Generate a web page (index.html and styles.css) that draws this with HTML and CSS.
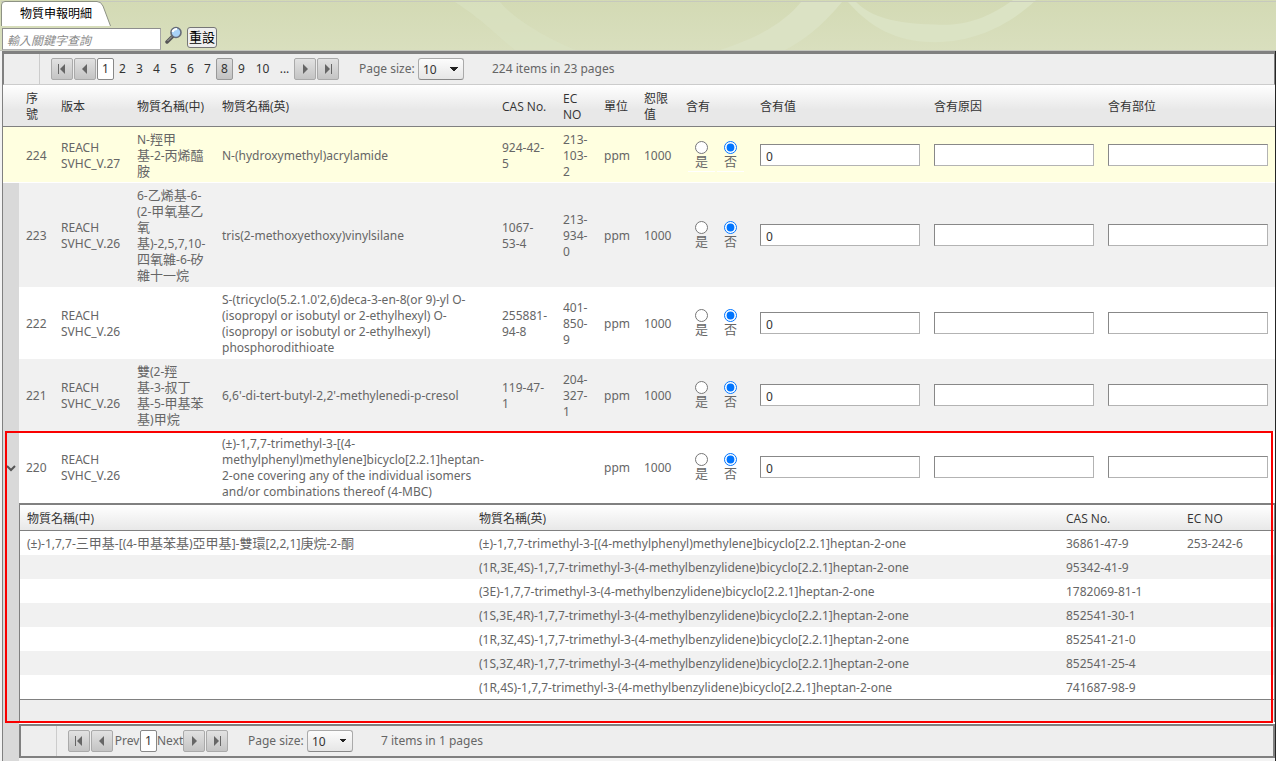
FILE: index.html
```html
<!DOCTYPE html>
<html lang="zh-Hant">
<head>
<meta charset="utf-8">
<title>物質申報明細</title>
<link rel="stylesheet" href="styles.css">
</head>
<body>
<header class="banner">
  <svg class="swirl" viewBox="0 0 1276 51" preserveAspectRatio="none" aria-hidden="true">
    <path d="M455 2C485 22 500 39 515 51H576C545 38 515 20 500 2Z" fill="#dbe2c3" opacity=".6"/>
    <path d="M720 51C760 38 785 22 801 2H842C822 27 802 42 785 51Z" fill="#dbe2c4"/>
    <path d="M848 2C875 34 905 43 935 43C978 43 1012 23 1036 0H1013C985 21 960 27 935 25C895 24 872 18 856 2Z" fill="#dbe3c4"/>
  </svg>
  <div class="tabs">
    <a class="tab" href="#">
      <svg class="tab-shape" viewBox="0 0 110 26" aria-hidden="true"><path d="M0.500 26V5Q0.500 1.500 4 1.500H96Q100 1.500 102 6L109.500 26" fill="#fff" stroke="#8d9284"/></svg>
      <span class="tab-text">物質申報明細</span>
    </a>
  </div>
  <form class="search">
    <input class="keyword" type="text" placeholder="輸入關鍵字查詢" aria-label="輸入關鍵字查詢">
    <svg class="lens" viewBox="0 0 18 18" aria-hidden="true"><path d="M2 16L8 10" stroke="#555" stroke-width="3.500" stroke-linecap="round"/><path d="M2.500 15L7 10.500" stroke="#aaa" stroke-width="1"/><circle cx="11" cy="6.500" r="5" fill="#a9d2f7" stroke="#666b78" stroke-width="1.600"/><path d="M7.500 6Q8.500 3 12 3" stroke="#fff" stroke-width="2" fill="none"/></svg>
    <button class="reset" type="button">重設</button>
  </form>
</header>

<main class="grid">
  <nav class="pager">
    <div class="pager-gutter"></div>
    <div class="pager-body">
      <div class="pager-buttons">
        <button class="pg" aria-label="First"><svg viewBox="0 0 10 10"><path d="M1.500 0V10" stroke="#666" fill="none"/><path d="M8 0V10L3 5Z" fill="#666"/></svg></button>
        <button class="pg" aria-label="Previous"><svg viewBox="0 0 10 10"><path d="M7 0V10L2 5Z" fill="#666"/></svg></button>
        <a class="num current" href="#">1</a><a class="num" href="#">2</a><a class="num" href="#">3</a><a class="num" href="#">4</a><a class="num" href="#">5</a><a class="num" href="#">6</a><a class="num" href="#">7</a><a class="num hover" href="#">8</a><a class="num" href="#">9</a><a class="num wide" href="#">10</a><a class="num more" href="#">...</a>
        <button class="pg" aria-label="Next"><svg viewBox="0 0 10 10"><path d="M3 0V10L8 5Z" fill="#666"/></svg></button>
        <button class="pg" aria-label="Last"><svg viewBox="0 0 10 10"><path d="M2 0V10L7 5Z" fill="#666"/><path d="M8.500 0V10" stroke="#666" fill="none"/></svg></button>
      </div>
      <label class="size" for="size-main">Page size:</label>
      <select class="size-box" id="size-main"><option>10</option><option>20</option></select>
      <span class="info">224 items in 23 pages</span>
    </div>
  </nav>

  <table class="items">
    <colgroup><col class="c-exp"><col class="c-no"><col class="c-ver"><col class="c-zh"><col><col class="c-cas"><col class="c-ec"><col class="c-unit"><col class="c-lim"><col class="c-has"><col class="c-in"><col class="c-in"><col class="c-in"></colgroup>
    <thead>
      <tr><th></th><th>序<br>號</th><th>版本</th><th>物質名稱(中)</th><th>物質名稱(英)</th><th>CAS No.</th><th>EC<br>NO</th><th>單位</th><th>恕限<br>值</th><th>含有</th><th>含有值</th><th>含有原因</th><th>含有部位</th></tr>
    </thead>
    <tbody>
      <tr class="active">
        <td class="exp"></td><td>224</td><td>REACH<br>SVHC_V.27</td>
        <td>N-<span class="zh">羥甲</span><br><span class="zh">基</span>-2-<span class="zh">丙烯醯</span><br><span class="zh">胺</span></td>
        <td>N-(hydroxymethyl)acrylamide</td><td>924-42-<br>5</td><td>213-<br>103-<br>2</td><td>ppm</td><td>1000</td>
        <td class="has"><div class="choice"><label><input type="radio" name="r224">是</label><label><input type="radio" name="r224" checked>否</label></div></td>
        <td><input class="field" value="0" aria-label="含有值"></td><td><input class="field" aria-label="含有原因"></td><td><input class="field" aria-label="含有部位"></td>
      </tr>
      <tr class="alt">
        <td class="exp"></td><td>223</td><td>REACH<br>SVHC_V.26</td>
        <td>6-<span class="zh">乙烯基</span>-6-<br>(2-<span class="zh">甲氧基乙</span><br><span class="zh">氧</span><br><span class="zh">基</span>)-2,5,7,10-<br><span class="zh">四氧雜</span>-6-<span class="zh">矽</span><br><span class="zh">雜十一烷</span></td>
        <td>tris(2-methoxyethoxy)vinylsilane</td><td>1067-<br>53-4</td><td>213-<br>934-<br>0</td><td>ppm</td><td>1000</td>
        <td class="has"><div class="choice"><label><input type="radio" name="r223">是</label><label><input type="radio" name="r223" checked>否</label></div></td>
        <td><input class="field" value="0" aria-label="含有值"></td><td><input class="field" aria-label="含有原因"></td><td><input class="field" aria-label="含有部位"></td>
      </tr>
      <tr>
        <td class="exp"></td><td>222</td><td>REACH<br>SVHC_V.26</td><td></td>
        <td>S-(tricyclo(5.2.1.0'2,6)deca-3-en-8(or 9)-yl O-<br>(isopropyl or isobutyl or 2-ethylhexyl) O-<br>(isopropyl or isobutyl or 2-ethylhexyl)<br>phosphorodithioate</td><td>255881-<br>94-8</td><td>401-<br>850-<br>9</td><td>ppm</td><td>1000</td>
        <td class="has"><div class="choice"><label><input type="radio" name="r222">是</label><label><input type="radio" name="r222" checked>否</label></div></td>
        <td><input class="field" value="0" aria-label="含有值"></td><td><input class="field" aria-label="含有原因"></td><td><input class="field" aria-label="含有部位"></td>
      </tr>
      <tr class="alt">
        <td class="exp"></td><td>221</td><td>REACH<br>SVHC_V.26</td>
        <td><span class="zh">雙</span>(2-<span class="zh">羥</span><br><span class="zh">基</span>-3-<span class="zh">叔丁</span><br><span class="zh">基</span>-5-<span class="zh">甲基苯</span><br><span class="zh">基</span>)<span class="zh">甲烷</span></td>
        <td>6,6'-di-tert-butyl-2,2'-methylenedi-p-cresol</td><td>119-47-<br>1</td><td>204-<br>327-<br>1</td><td>ppm</td><td>1000</td>
        <td class="has"><div class="choice"><label><input type="radio" name="r221">是</label><label><input type="radio" name="r221" checked>否</label></div></td>
        <td><input class="field" value="0" aria-label="含有值"></td><td><input class="field" aria-label="含有原因"></td><td><input class="field" aria-label="含有部位"></td>
      </tr>
      <tr>
        <td class="exp"><button class="toggle" aria-label="Collapse"><svg viewBox="0 0 10 7"><path d="M1 1L5 5L9 1" fill="none" stroke="#555" stroke-width="2"/></svg></button></td><td>220</td><td>REACH<br>SVHC_V.26</td><td></td>
        <td>(±)-1,7,7-trimethyl-3-[(4-<br>methylphenyl)methylene]bicyclo[2.2.1]heptan-<br>2-one covering any of the individual isomers<br>and/or combinations thereof (4-MBC)</td><td></td><td></td><td>ppm</td><td>1000</td>
        <td class="has"><div class="choice"><label><input type="radio" name="r220">是</label><label><input type="radio" name="r220" checked>否</label></div></td>
        <td><input class="field" value="0" aria-label="含有值"></td><td><input class="field" aria-label="含有原因"></td><td><input class="field" aria-label="含有部位"></td>
      </tr>
      <tr>
        <td class="exp"></td>
        <td class="detail" colspan="12">
          <div class="marked">
            <div class="red-frame"></div>
            <div class="detail-grid">
              <table class="parts">
                <colgroup><col><col class="p-en"><col class="p-cas"><col class="p-ec"></colgroup>
                <thead><tr><th>物質名稱(中)</th><th>物質名稱(英)</th><th>CAS No.</th><th>EC NO</th></tr></thead>
                <tbody>
                  <tr><td>(±)-1,7,7-<span class="zh">三甲基</span>-[(4-<span class="zh">甲基苯基</span>)<span class="zh">亞甲基</span>]-<span class="zh">雙環</span>[2,2,1]<span class="zh">庚烷</span>-2-<span class="zh">酮</span></td><td>(±)-1,7,7-trimethyl-3-[(4-methylphenyl)methylene]bicyclo[2.2.1]heptan-2-one</td><td>36861-47-9</td><td>253-242-6</td></tr>
                  <tr class="alt"><td></td><td>(1R,3E,4S)-1,7,7-trimethyl-3-(4-methylbenzylidene)bicyclo[2.2.1]heptan-2-one</td><td>95342-41-9</td><td></td></tr>
                  <tr><td></td><td>(3E)-1,7,7-trimethyl-3-(4-methylbenzylidene)bicyclo[2.2.1]heptan-2-one</td><td>1782069-81-1</td><td></td></tr>
                  <tr class="alt"><td></td><td>(1S,3E,4R)-1,7,7-trimethyl-3-(4-methylbenzylidene)bicyclo[2.2.1]heptan-2-one</td><td>852541-30-1</td><td></td></tr>
                  <tr><td></td><td>(1R,3Z,4S)-1,7,7-trimethyl-3-(4-methylbenzylidene)bicyclo[2.2.1]heptan-2-one</td><td>852541-21-0</td><td></td></tr>
                  <tr class="alt"><td></td><td>(1S,3Z,4R)-1,7,7-trimethyl-3-(4-methylbenzylidene)bicyclo[2.2.1]heptan-2-one</td><td>852541-25-4</td><td></td></tr>
                  <tr><td></td><td>(1R,4S)-1,7,7-trimethyl-3-(4-methylbenzylidene)bicyclo[2.2.1]heptan-2-one</td><td>741687-98-9</td><td></td></tr>
                </tbody>
              </table>
              <div class="parts-foot"></div>
            </div>
          </div>
          <nav class="pager sub">
            <div class="pager-gutter"></div>
            <div class="pager-body">
              <div class="pager-buttons">
                <button class="pg" aria-label="First"><svg viewBox="0 0 10 10"><path d="M1.500 0V10" stroke="#666" fill="none"/><path d="M8 0V10L3 5Z" fill="#666"/></svg></button>
                <button class="pg" aria-label="Previous"><svg viewBox="0 0 10 10"><path d="M7 0V10L2 5Z" fill="#666"/></svg></button>
                <a class="word" href="#">Prev</a><a class="num current" href="#">1</a><a class="word" href="#">Next</a>
                <button class="pg" aria-label="Next page"><svg viewBox="0 0 10 10"><path d="M3 0V10L8 5Z" fill="#666"/></svg></button>
                <button class="pg" aria-label="Last"><svg viewBox="0 0 10 10"><path d="M2 0V10L7 5Z" fill="#666"/><path d="M8.500 0V10" stroke="#666" fill="none"/></svg></button>
              </div>
              <label class="size" for="size-sub">Page size:</label>
              <select class="size-box" id="size-sub"><option>10</option><option>20</option></select>
              <span class="info">7 items in 1 pages</span>
            </div>
          </nav>
        </td>
      </tr>
    </tbody>
  </table>
</main>
</body>
</html>
```

FILE: styles.css
```css
* { box-sizing: border-box; }
html { overflow: hidden; background: #f3f3f3; }
body {
  margin: 0;
  font: 12px/16px "Noto Sans", "Noto Sans CJK TC", sans-serif;
  color: #666;
}
a { color: inherit; text-decoration: none; }
button, input, select { font: inherit; color: inherit; margin: 0; }
.zh { font-size: 13px; line-height: 1; }

/* Banner */
.banner {
  position: relative;
  border-bottom: 1px solid #c4c6be;
  background: linear-gradient(#d3dab4, #d9dfbe);
}
.swirl { position: absolute; inset: 0; width: 100%; height: 100%; }
.tabs { position: relative; height: 26px; margin-left: 1px; }
.tabs::before { content: ""; position: absolute; top: 1px; left: 0; right: 0; border-top: 1px solid #c6c9bd; }
.tab { position: relative; display: block; width: 110px; height: 26px; color: #000; }
.tab-shape { display: block; width: 110px; height: 26px; }
.tab-text { position: absolute; inset: 6px 0 0 19px; }
.search { position: relative; display: flex; align-items: flex-start; height: 24px; padding-left: 2px; }
.keyword {
  width: 159px; height: 22px; margin-top: 2px; padding: 2px 4px 0;
  border: 1px solid #b3b3b3; border-color: #8e8e8e #a5a5a5 #b3b3b3 #8e8e8e;
  background: #fff; font-style: italic;
}
.keyword::placeholder { color: #8a8a8a; opacity: 1; }
.lens { width: 18px; height: 18px; margin: 0 4px; }
.reset {
  width: 30px; height: 21px; margin-top: 1px; padding: 0;
  border: 1px solid #767676; border-radius: 3px; background: #efefef;
  color: #000; font-size: 13px; line-height: 19px;
}

/* Pager */
.grid { margin-left: 2px; border-left: 1px solid #808080; border-right: 1px solid #252525; background: #fff; }
.pager {
  display: flex; height: 34px;
  border: 1px solid #808080; border-width: 3px 1px 1px; border-bottom-color: #ccc;
  background: #eee;
}
.pager-gutter { width: 36px; border-right: 1px solid #ccc; }
.pager-body { display: flex; align-items: center; padding-left: 11px; }
.pager-buttons { display: flex; align-items: center; }
.pg {
  display: flex; align-items: center; justify-content: center;
  width: 22px; height: 22px; margin-right: 1px; padding: 0;
  border: 1px solid #aaa; border-radius: 2px;
  background: linear-gradient(#e2e2e2, #c4c4c4);
}
.pg svg { width: 10px; height: 10px; }
.num {
  width: 17px; height: 22px; border: 1px solid transparent; border-radius: 2px;
  color: #333; line-height: 20px; text-align: center;
}
.current { border-color: #888; background: #fff; }
.hover { border-color: #999; background: linear-gradient(#dedede, #c2c2c2); }
.wide { width: 25px; }
.more { width: 19px; }
.size { width: 56px; margin: 0 3px 0 19px; white-space: nowrap; }
.size-box {
  width: 46px; height: 22px; padding: 1px 4px 0;
  appearance: none; border: 1px solid #aaa; border-bottom-color: #888; border-radius: 3px; color: #333;
  background: linear-gradient(45deg, transparent 50%, #222 50%) 31px 8px / 4px 4px no-repeat, linear-gradient(-45deg, transparent 50%, #222 50%) 35px 8px / 4px 4px no-repeat, linear-gradient(#fcfcfc, #e6e6e6);
}
.info { margin-left: 28px; }

/* Item table */
table { width: 100%; border-collapse: separate; border-spacing: 0; table-layout: fixed; }
th, td { text-align: left; }
th { color: #333; font-family: "Open Sans", "Noto Sans CJK TC", sans-serif; font-weight: 400; border-bottom: 1px solid #808080; }
.items > thead > tr > th { height: 42px; padding: 3px 0 0 7px; background: linear-gradient(#fff, #e8e8e8 60%); }
.items > tbody > tr > td { padding: 5px 0 3px 7px; white-space: nowrap; vertical-align: middle; }
.c-exp { width: 16px; }
.c-no { width: 35px; }
.c-ver { width: 76px; }
.c-zh { width: 85px; }
.c-cas { width: 61px; }
.c-ec { width: 41px; }
.c-unit { width: 40px; }
.c-lim { width: 42px; }
.c-has { width: 74px; }
.c-in { width: 174px; }
.alt > td { background: #f1f1f1; }
.items > tbody > .active > td { background: #ffffe0; border-bottom: 1px solid #fff; padding-bottom: 2px; }
.items > tbody > tr > .exp { padding: 0; background: #d9d9d9; }
.items > tbody > .active > .exp { background: #ffffe0; }
.toggle { display: block; width: 16px; padding: 2px 0 0 3px; border: 0; background: none; }
.toggle svg { display: block; width: 10px; height: 7px; }
.items > tbody > tr > .has { padding-top: 0; padding-bottom: 0; }
.choice { display: flex; gap: 2px; padding-left: 2px; }
.choice label { display: flex; flex-direction: column; align-items: center; width: 27px; padding: 3px 0 2px; border-bottom: 1px solid transparent; font-size: 13px; line-height: 15px; }
.items > tbody > .active .choice label { border-color: #fff; padding-top: 4px; }
.choice input { width: 13px; height: 13px; }
.field {
  display: block; width: 160px; height: 22px; margin-top: -2px; padding: 3px 5px 0;
  border: 1px solid; border-color: #888 #b3b3b3 #b3b3b3 #888; background: #fff; color: #333;
}

/* Expanded detail */
.items > tbody > tr > .detail { padding: 0 0 3px; background: #f3f3f3; }
.marked { position: relative; padding-bottom: 2px; background: #fff; }
.red-frame { position: absolute; inset: -72px 2px 1px -14px; border: 2px solid #fa0000; }
.detail-grid { border: 1px solid #808080; border-width: 2px 1px 0; }
.parts th, .parts td { height: 24px; padding: 2px 0 0 7px; white-space: nowrap; }
.parts th { height: 26px; background: linear-gradient(#fff, #e8e8e8); }
.p-en { width: 587px; }
.p-cas { width: 121px; }
.p-ec { width: 94px; }
.parts-foot { height: 23px; border-top: 1px solid #808080; background: #eee; }
.sub { border-width: 2px 2px 2px; border-bottom-color: #808080; }
.word { width: 26px; text-align: center; }
```
